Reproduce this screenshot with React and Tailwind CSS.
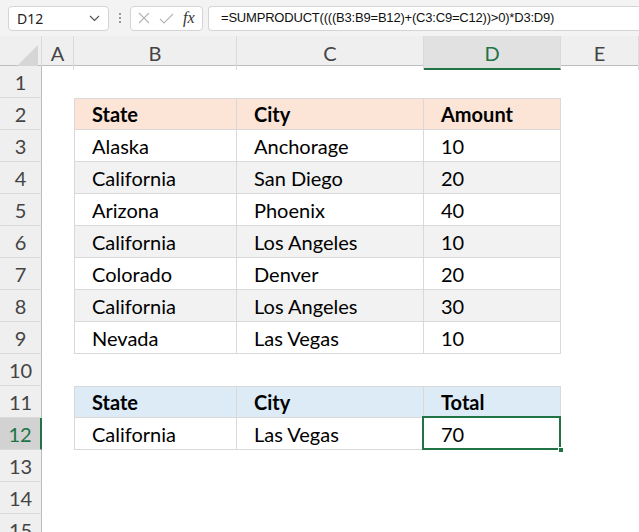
import React from "react";

const COLS = ["A", "B", "C", "D", "E"];
const GRID = "grid grid-cols-[42px_32px_163px_187px_137px_1fr]";

// rows of the sheet, index = row number - 1
const rows = [
  null,
  { kind: "head", bg: "bg-[#fce4d6]", cells: ["State", "City", "Amount"] },
  { bg: "bg-white", cells: ["Alaska", "Anchorage", "10"] },
  { bg: "bg-[#f2f2f2]", cells: ["California", "San Diego", "20"] },
  { bg: "bg-white", cells: ["Arizona", "Phoenix", "40"] },
  { bg: "bg-[#f2f2f2]", cells: ["California", "Los Angeles", "10"] },
  { bg: "bg-white", cells: ["Colorado", "Denver", "20"] },
  { bg: "bg-[#f2f2f2]", cells: ["California", "Los Angeles", "30"] },
  { bg: "bg-white", cells: ["Nevada", "Las Vegas", "10"] },
  null,
  { kind: "head", bg: "bg-[#ddebf7]", cells: ["State", "City", "Total"], top: true },
  { bg: "bg-white", cells: ["California", "Las Vegas", "70"], selected: true },
  null,
  null,
  null,
];

function FormulaBar() {
  return (
    <div className="flex h-[36px] items-center bg-[#f3f3f3] pl-2 font-['Noto_Sans',sans-serif]">
      <div className="flex h-[25px] w-[101px] items-center justify-between rounded border border-[#d4d4d4] bg-white pl-2 pr-2 text-[14px] text-[#222]">
        <span>D12</span>
        <svg width="11" height="7" viewBox="0 0 11 7" fill="none" stroke="#555" strokeWidth="1.2">
          <path d="M1 1l4.5 4.5L10 1" />
        </svg>
      </div>
      <div className="ml-[10px] mr-[9px] flex flex-col gap-[2px]">
        <span className="h-[2px] w-[2px] bg-[#999]" />
        <span className="h-[2px] w-[2px] bg-[#999]" />
        <span className="h-[2px] w-[2px] bg-[#999]" />
      </div>
      <div className="flex h-[25px] w-[73px] items-center gap-[9px] rounded border border-[#d4d4d4] bg-white pl-[7px]">
        <svg width="12" height="12" viewBox="0 0 12 12" stroke="#b5b5b5" strokeWidth="1.1">
          <path d="M1 1l10 10M11 1L1 11" />
        </svg>
        <svg width="15" height="11" viewBox="0 0 15 11" fill="none" stroke="#b5b5b5" strokeWidth="1.1">
          <path d="M1 6l4 4L14 1" />
        </svg>
        <span className="font-['Liberation_Serif',serif] text-[16px] italic text-[#333]">fx</span>
      </div>
      <div className="ml-[5px] flex h-[25px] flex-1 items-center rounded-l border border-r-0 border-[#d4d4d4] bg-white pl-[12px] font-['Liberation_Sans',sans-serif] text-[13px] tracking-[-0.2px] text-[#111]">
        =SUMPRODUCT((((B3:B9=B12)+(C3:C9=C12))&gt;0)*D3:D9)
      </div>
    </div>
  );
}

function ColumnHeaders() {
  return (
    <div className={`${GRID} h-[30px] border-b border-[#bdbdbd] bg-[#efefef] text-[20px] text-[#444]`}>
      <div className="flex items-end justify-end border-r border-[#dadada] p-[3px]">
        <svg width="22" height="22" viewBox="0 0 22 22">
          <path d="M22 0V22H0Z" fill="#d6d6d6" />
        </svg>
      </div>
      {COLS.map((c) =>
        c === "D" ? (
          <div
            key={c}
            className="flex items-center justify-center border-b-2 border-r border-[#217346] border-r-[#dadada] bg-[#e1e1e1] pt-[2px] text-[#217346]"
          >
            {c}
          </div>
        ) : (
          <div key={c} className="flex items-center justify-center border-r border-[#dadada]">
            {c}
          </div>
        )
      )}
    </div>
  );
}

function Row({ n, row }) {
  const selectedRow = row && row.selected;
  return (
    <div className={`${GRID} h-[32px]`}>
      <div
        className={`flex items-center justify-center border-b border-[#dadada] text-[20px] ${
          selectedRow
            ? "border-r-2 border-r-[#217346] bg-[#d2d2d2] text-[#217346]"
            : "border-r border-r-[#bdbdbd] bg-[#efefef] text-[#444]"
        }`}
      >
        {n}
      </div>
      <div />
      {row
        ? row.cells.map((t, i) => {
            const isSel = row.selected && i === 2;
            return (
              <div
                key={i}
                className={`relative flex items-center border-b border-r border-[#d9d9d9] pl-[17px] ${row.bg} ${
                  i === 0 ? "border-l" : ""
                } ${n === 2 || row.top ? "border-t" : ""} ${row.kind === "head" ? "font-bold" : ""}`}
              >
                {t}
                {isSel && (
                  <>
                    <span className="absolute -left-[2px] -top-[2px] bottom-[-1px] right-[-1px] border-2 border-[#217346]" />
                    <span className="absolute bottom-[-4px] right-[-4px] h-[6px] w-[6px] border border-white bg-[#217346]" />
                  </>
                )}
              </div>
            );
          })
        : [<div key="b" />, <div key="c" />, <div key="d" />]}
      <div />
    </div>
  );
}

export default function App() {
  return (
    <div className="h-[532px] w-[639px] overflow-hidden bg-white font-['Lato',sans-serif] text-[20px] text-black">
      <FormulaBar />
      <ColumnHeaders />
      {rows.map((row, i) => (
        <Row key={i} n={i + 1} row={row} />
      ))}
    </div>
  );
}
